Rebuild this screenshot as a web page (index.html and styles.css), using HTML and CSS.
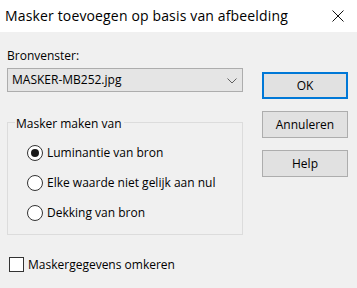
FILE: index.html
```html
<!DOCTYPE html>
<html lang="nl">
<head>
  <meta charset="UTF-8">
  <title>Masker toevoegen op basis van afbeelding</title>
  <link rel="stylesheet" href="styles.css">
</head>
<body>
  <div class="dialog">
    <div class="titlebar">
      <span class="title">Masker toevoegen op basis van afbeelding</span>
      <svg class="close" width="12" height="12" viewBox="0 0 12 12">
        <path d="M0.5 0.5 L11.5 11.5 M11.5 0.5 L0.5 11.5" stroke="#111" stroke-width="1" fill="none"/>
      </svg>
    </div>
    <div class="content">
      <div class="main">
        <div class="left">
          <div class="label">Bronvenster:</div>
          <div class="select">
            <span>MASKER-MB252.jpg</span>
            <svg width="10" height="6" viewBox="0 0 10 6">
              <path d="M0.5 0.5 L5 5 L9.5 0.5" stroke="#606060" stroke-width="1" fill="none"/>
            </svg>
          </div>
          <fieldset class="group">
            <legend>Masker maken van</legend>
            <div class="radio"><span class="dot checked"></span>Luminantie van bron</div>
            <div class="radio"><span class="dot"></span>Elke waarde niet gelijk aan nul</div>
            <div class="radio"><span class="dot"></span>Dekking van bron</div>
          </fieldset>
        </div>
        <div class="buttons">
          <div class="btn default">OK</div>
          <div class="btn">Annuleren</div>
          <div class="btn">Help</div>
        </div>
      </div>
      <div class="check"><span class="box"></span>Maskergegevens omkeren</div>
    </div>
  </div>
</body>
</html>
```

FILE: styles.css
```css
*{
  margin: 0;
  padding: 0;
  box-sizing: border-box;
}
body{
  background: #f0f0f0;
  font-family: "Open Sans", "Noto Sans", sans-serif;
  font-size: 12px;
  line-height: 16px;
  color: #000;
}
.dialog{
  width: 357px;
  height: 288px;
  overflow: hidden;
}
.titlebar{
  height: 32px;
  background: #fff;
  display: flex;
  align-items: center;
  justify-content: space-between;
  padding: 0 13px 0 5px;
}
.title{
  font-size: 14px;
  letter-spacing: 0.15px;
  line-height: 32px;
}
.close{
  margin-top: -1px;
}
.content{
  padding: 16px 9px 0 7px;
}
.main{
  display: flex;
}
.left{
  width: 236px;
}
.label{
  height: 16px;
}
.select{
  margin-top: 4px;
  height: 24px;
  border: 1px solid #adadad;
  background: #e5e5e5;
  display: flex;
  align-items: center;
  justify-content: space-between;
  padding: 0 5px 0 4px;
  line-height: 22px;
}
.select svg{
  margin-top: 1px;
}
.group{
  margin-top: 20px;
  border: 1px solid #dcdcdc;
  padding: 6px 0 6px 0;
}
.group legend{
  margin-left: 7px;
  padding: 4px 2px 0 1px;
  line-height: 16px;
}
.radio{
  height: 30px;
  display: flex;
  align-items: center;
  padding-left: 19px;
}
.dot{
  width: 16px;
  height: 16px;
  border: 1px solid #333;
  border-radius: 50%;
  background: #fff;
  margin-right: 4px;
  display: flex;
  align-items: center;
  justify-content: center;
}
.dot.checked::after{
  content: "";
  width: 8px;
  height: 8px;
  border-radius: 50%;
  background: #1a1a1a;
}
.buttons{
  margin-left: 19px;
  margin-top: 24px;
  width: 86px;
  display: flex;
  flex-direction: column;
  gap: 12px;
}
.btn{
  height: 27px;
  border: 1px solid #adadad;
  background: #e1e1e1;
  display: flex;
  align-items: center;
  justify-content: center;
}
.btn.default{
  border: 2px solid #0078d7;
}
.check{
  margin-top: 22px;
  margin-left: 2px;
  height: 15px;
  display: flex;
  align-items: center;
}
.box{
  width: 15px;
  height: 15px;
  border: 1px solid #333;
  background: #fff;
  margin-right: 4px;
}
```
